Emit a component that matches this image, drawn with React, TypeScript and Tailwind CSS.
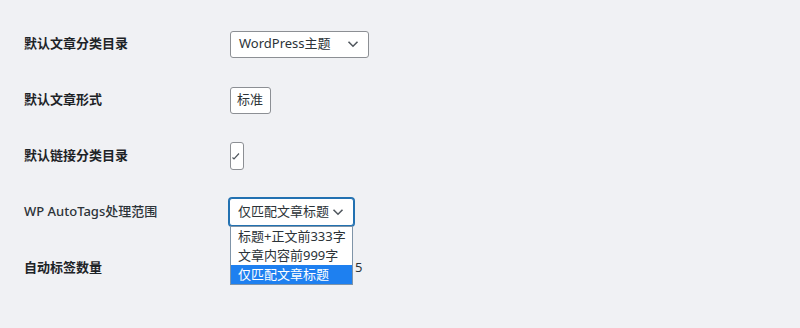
import React from 'react';

const font = { fontFamily: '"Noto Sans", "Noto Sans CJK SC", sans-serif' };

const Chevron: React.FC = () => (
  <svg width="12" height="8" viewBox="0 0 12 8" className="shrink-0">
    <path d="M1.5 1.8 6 6.2l4.5-4.4" fill="none" stroke="#50575e" strokeWidth="1.6" />
  </svg>
);

export default function App() {
  return (
    <div className="w-[800px] h-[328px] bg-[#f0f1f4] text-[#1d2327] overflow-hidden" style={font}>
      <div className="flex flex-col pt-4 pl-6">
        {/* row 1 */}
        <div className="flex items-center h-14">
          <div className="w-[206px] text-[13px] font-semibold">默认文章分类目录</div>
          <div className="w-[139px] h-[27px] flex items-center justify-between pl-2 pr-[9px] bg-white border border-[#8c8f94] rounded-[3px] text-[13px] text-[#2c3338]">
            <span>WordPress主题</span>
            <Chevron />
          </div>
        </div>
        {/* row 2 */}
        <div className="flex items-center h-14">
          <div className="w-[206px] text-[13px] font-semibold">默认文章形式</div>
          <div className="w-[41px] h-[27px] flex items-center pl-[6px] bg-white border border-[#8c8f94] rounded-[3px] text-[13px] text-[#2c3338] overflow-hidden">
            标准
          </div>
        </div>
        {/* row 3 */}
        <div className="flex items-center h-14">
          <div className="w-[206px] text-[13px] font-semibold">默认链接分类目录</div>
          <div className="w-[14px] h-[28px] flex items-center bg-white border border-[#8c8f94] rounded-[3px] overflow-hidden">
            <svg width="8" height="8" viewBox="0 0 8 8" className="ml-[1px]">
              <path d="M0.5 5.5 2 7 7 1.5" fill="none" stroke="#50575e" strokeWidth="1.2" />
            </svg>
          </div>
        </div>
        {/* row 4 */}
        <div className="flex items-center h-14">
          <div className="w-[205px] text-[13px] font-medium text-[#2c3338]">WP AutoTags处理范围</div>
          <div className="relative">
            <div className="w-[125px] h-[28px] flex items-center justify-between pl-2 pr-[9px] bg-white border border-[#2271b1] shadow-[0_0_0_1px_#2271b1] rounded-[3px] text-[13px] text-[#2c3338]">
              <span>仅匹配文章标题</span>
              <Chevron />
            </div>
            <div className="absolute left-[1px] top-[28px] w-[123px] bg-white border border-[#7f94a8] text-[13px] text-[#2c3338] z-10">
              <div className="h-[19px] leading-[19px] pl-[7px] whitespace-nowrap">标题+正文前333字</div>
              <div className="h-[19px] leading-[19px] pl-[7px] whitespace-nowrap">文章内容前999字</div>
              <div className="h-[19px] leading-[19px] pl-[7px] whitespace-nowrap bg-[#1e80f0] text-white">仅匹配文章标题</div>
            </div>
          </div>
        </div>
        {/* row 5 */}
        <div className="flex items-center h-14">
          <div className="w-[206px] text-[13px] font-semibold">自动标签数量</div>
          <div className="pl-[125px] text-[13px] text-[#2c3338]">5</div>
        </div>
      </div>
    </div>
  );
}
